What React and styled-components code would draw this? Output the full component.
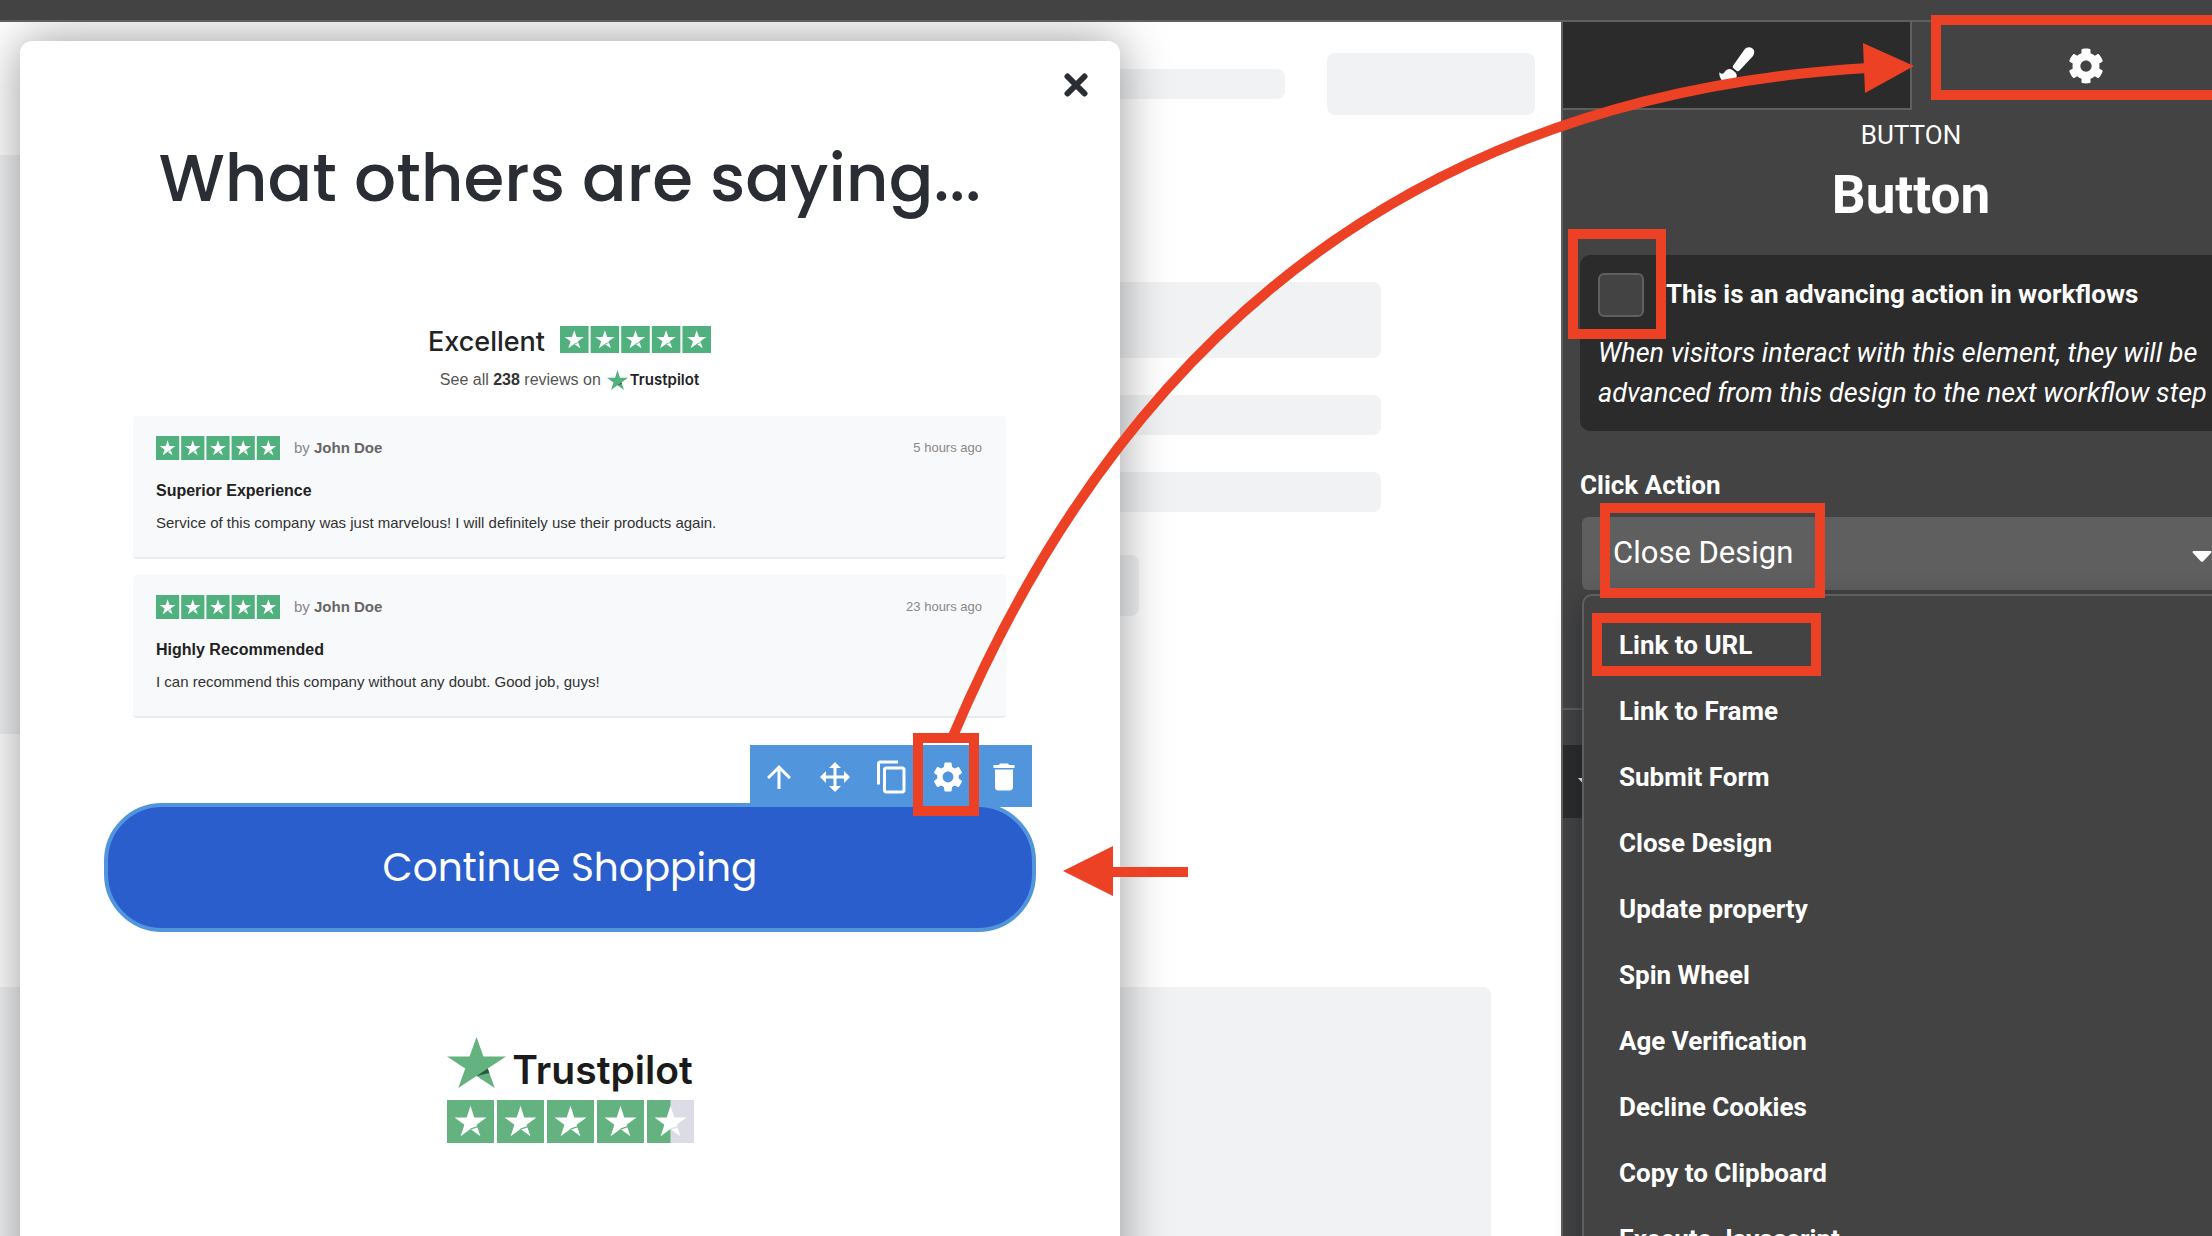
import React from "react";
import styled, { createGlobalStyle } from "styled-components";
import { FaCog } from "react-icons/fa";
import { MdArrowUpward, MdContentCopy, MdDelete, MdSettings } from "react-icons/md";

const red = "#ec4125";
const green = "#50b17f";

const GlobalStyle = createGlobalStyle`
  * {
    box-sizing: border-box;
  }

  body {
    margin: 0;
    background: #fff;
    font-family: Roboto, sans-serif;
  }

  button, input, select {
    font: inherit;
    margin: 0;
  }
`;

const Page = styled.div`
  position: relative;
  display: flex;
  flex-direction: column;
  height: 100vh;
  overflow: hidden;
`;

const TopBar = styled.header`
  flex: none;
  height: 22px;
  background: #434343;
  border-bottom: 2px solid #5f5f5f;
`;

const Workspace = styled.div`
  display: flex;
  flex: 1;
  min-height: 0;
`;

const Highlight = styled.span`
  position: absolute;
  z-index: 3;
  inset: ${(props) => props.$inset};
  width: ${(props) => props.$width || "auto"};
  border: 10px solid ${red};
  pointer-events: none;
`;

/* Placeholder site behind the popup */

const Canvas = styled.main`
  position: relative;
  flex: 1;
  min-width: 0;
  overflow: hidden;
`;

const Placeholder = styled.div`
  width: ${(props) => props.$width || "auto"};
  height: ${(props) => props.$height};
  background: #f0f2f4;
  border-radius: 8px;
`;

const HeroButton = styled(Placeholder)`
  margin-top: 6px;
`;

const SiteHeader = styled.div`
  display: flex;
  justify-content: flex-end;
  align-items: center;
  gap: 42px;
  height: 133px;
  padding: 0 26px 9px 0;
`;

const Hero = styled.div`
  display: flex;
  gap: 160px;
  height: 579px;
  margin-left: -8px;
  padding-right: 180px;
`;

const HeroCopy = styled.div`
  flex: 1;
  display: flex;
  flex-direction: column;
  gap: 37px;
  padding-top: 127px;
`;

const SiteSection = styled.div`
  margin-left: -8px;
  padding: 253px 70px 0 0;
`;

/* Popup */

const Popup = styled.section`
  position: absolute;
  top: 19px;
  left: 20px;
  width: 1100px;
  min-height: 1300px;
  padding: 87px 84px 0;
  background: #fff;
  border-radius: 12px;
  box-shadow: 0 0 50px rgba(0, 0, 0, 0.4);
  font-family: "Liberation Sans", sans-serif;
`;

const Close = styled.button`
  position: absolute;
  top: 26px;
  right: 26px;
  display: flex;
  padding: 6px;
  border: 0;
  background: none;
`;

const Title = styled.h1`
  margin: 0;
  color: #2a2d34;
  font: 500 66px/100px Poppins, Inter, sans-serif;
  text-align: center;
  white-space: nowrap;
`;

const Reviews = styled.div`
  display: flex;
  flex-direction: column;
  padding: 98px 30px 0 29px;
`;

const Summary = styled.div`
  display: flex;
  justify-content: center;
  align-items: flex-start;
  gap: 15px;
  color: #222;
  font: 500 27px/32px Inter, sans-serif;
`;

const SummaryNote = styled.p`
  display: flex;
  justify-content: center;
  align-items: center;
  gap: 6px;
  margin: 8px 0 22px;
  color: #555;
  font-size: 16px;
  line-height: 28px;

  strong {
    color: #333;
  }
`;

const InlineBrand = styled.span`
  display: flex;
  align-items: center;
  gap: 2px;
  color: #222;
  font: 600 15px/28px Inter, sans-serif;
`;

const Card = styled.article`
  margin-bottom: 16px;
  padding: 20px 24px 22px 23px;
  background: #f8f9fb;
  border-bottom: 2px solid #e8ebf0;
  border-radius: 4px;
  color: #333;
  font-size: 15px;
  line-height: 24px;
`;

const CardTop = styled.div`
  display: flex;
  align-items: center;
  gap: 14px;
  color: #888;
`;

const Author = styled.span`
  flex: 1;

  strong {
    color: #666;
  }
`;

const Time = styled.time`
  font-size: 13px;
`;

const CardTitle = styled.h2`
  margin: 19px 0 8px;
  color: #222;
  font-size: 16px;
  line-height: 24px;
`;

const CardText = styled.p`
  margin: 0;
`;

const ActionWrap = styled.div`
  position: relative;
  margin-top: 69px;
`;

const Toolbar = styled.div`
  position: absolute;
  z-index: 1;
  right: 4px;
  bottom: 125px;
  display: flex;
  width: 282px;
  height: 62px;
  padding: 2px 0 0 1px;
  background: #5195dd;
`;

const Tool = styled.button`
  position: relative;
  flex: 1;
  display: flex;
  justify-content: center;
  align-items: center;
  padding: 0;
  border: 0;
  background: none;
  color: #fff;
`;

const ActionButton = styled.button`
  display: block;
  width: 100%;
  height: 129px;
  padding: 0;
  background: #2a5ecd;
  border: 4px solid #5195dd;
  border-radius: 58px;
  color: #fff;
  font: 400 39px/60px Poppins, Inter, sans-serif;
`;

const Brand = styled.div`
  display: flex;
  flex-direction: column;
  align-items: center;
  gap: 12px;
  margin-top: 105px;
`;

const BrandName = styled.div`
  display: flex;
  gap: 6px;
  height: 51px;
  color: #1b1b1b;
  font: 600 39px/66px Inter, sans-serif;
`;

/* Settings panel */

const Sidebar = styled.aside`
  flex: none;
  width: 651px;
  background: #434343;
  border-left: 2px solid #5f5f5f;
  color: #fff;
`;

/* Wider than the visible sidebar, the rest runs off the window */
const Panel = styled.div`
  width: 696px;
`;

const Tabs = styled.div`
  display: flex;
`;

const Tab = styled.button`
  position: relative;
  flex: 1;
  display: flex;
  justify-content: center;
  align-items: center;
  height: 88px;
  padding: 0;
  background: ${(props) => (props.$active ? "#434343" : "#2b2b2b")};
  border: 0 solid #5f5f5f;
  border-width: ${(props) => (props.$active ? "0" : "0 2px 2px 0")};
  color: #fff;
`;

const PanelType = styled.p`
  margin: 10px 0 15px;
  font-size: 26px;
  line-height: 30px;
  text-align: center;
`;

const PanelTitle = styled.h2`
  margin: 0 0 30px;
  font-size: 53px;
  font-weight: 700;
  line-height: 60px;
  text-align: center;
`;

const OptionCard = styled.div`
  margin: 0 17px 39px;
  padding: 18px;
  background: #2b2b2b;
  border-radius: 10px;
`;

const CheckRow = styled.div`
  position: relative;
  display: flex;
  align-items: center;
  gap: 22px;
  font-size: 26px;
  font-weight: 700;
`;

const CheckLabel = styled.label`
  padding-bottom: 2px;
`;

const Checkbox = styled.input`
  appearance: none;
  width: 46px;
  height: 44px;
  background: #434343;
  border: 2px solid #5f5f5f;
  border-radius: 6px;
`;

const Hint = styled.p`
  margin: 16px 0 0;
  font-size: 27px;
  font-style: italic;
  line-height: 40px;
  white-space: nowrap;
`;

const Field = styled.div`
  position: relative;
  margin: 0 17px;
`;

const FieldLabel = styled.label`
  display: block;
  margin-bottom: 17px;
  font-size: 26px;
  font-weight: 700;
  line-height: 30px;
`;

const SelectWrap = styled.div`
  position: relative;
  margin-left: 2px;
`;

const Select = styled.select`
  appearance: none;
  display: block;
  width: 100%;
  height: 73px;
  padding: 0 31px 2px;
  background: #5f5f5f;
  border: 0;
  border-radius: 6px;
  color: #fff;
  font-size: 31px;
`;

const Caret = styled.svg`
  position: absolute;
  top: 34px;
  right: 30px;
`;

const Menu = styled.ul`
  position: absolute;
  z-index: 1;
  top: 77px;
  left: 0;
  right: 0;
  margin: 0;
  padding: 16px 0;
  list-style: none;
  background: #434343;
  border: 2px solid #5f5f5f;
  border-radius: 10px;
  box-shadow: 0 8px 24px rgba(25, 30, 40, 0.5);
`;

const MenuItem = styled.li`
  position: relative;
`;

const MenuButton = styled.button`
  display: block;
  width: 100%;
  padding: 0 35px;
  border: 0;
  background: none;
  color: #fff;
  font-size: 26px;
  font-weight: 700;
  line-height: 66px;
  text-align: left;
`;

const Divider = styled.hr`
  margin: 118px 0 35px;
  border: 0;
  border-top: 2px solid #5f5f5f;
`;

const SectionBar = styled.div`
  display: flex;
  align-items: center;
  height: 73px;
  padding-left: 15px;
  background: #2b2b2b;
`;

const Arrows = styled.svg`
  position: absolute;
  z-index: 4;
  top: 0;
  left: 0;
  pointer-events: none;
`;

const actions = [
  "Link to URL",
  "Link to Frame",
  "Submit Form",
  "Close Design",
  "Update property",
  "Spin Wheel",
  "Age Verification",
  "Decline Cookies",
  "Copy to Clipboard",
  "Execute Javascript",
];

const reviews = [
  {
    title: "Superior Experience",
    text: "Service of this company was just marvelous! I will definitely use their products again.",
    time: "5 hours ago",
  },
  {
    title: "Highly Recommended",
    text: "I can recommend this company without any doubt. Good job, guys!",
    time: "23 hours ago",
  },
];

const starPath = "M50 0 61.8 36.3H100L69.1 58.8 80.9 95 50 72.6 19.1 95 30.9 58.8 0 36.3H38.2Z";

const Stars = ({ width, height, size, gap, color = green, half }) => {
  const total = size * 5 + gap * 4;
  const scale = (size * 0.68) / 100;
  return (
    <svg width={width} height={height} viewBox={`0 0 ${total} ${height}`} preserveAspectRatio="none">
      {[0, 1, 2, 3, 4].map((i) => {
        const x = i * (size + gap);
        const isHalf = half && i === 4;
        return (
          <g key={i} transform={`translate(${x} 0)`}>
            <rect width={size} height={height} fill={isHalf ? "#dcdce6" : color} />
            {isHalf && <rect width={size / 2} height={height} fill={color} />}
            <g transform={`translate(${size * 0.16} ${height / 2 - scale * 49}) scale(${scale})`}>
              <path d={starPath} fill="#fff" />
              <path d="M50 72.6 75 64" stroke={isHalf ? "#dcdce6" : color} strokeWidth="4" />
            </g>
          </g>
        );
      })}
    </svg>
  );
};

const BrandStar = ({ width, height, color = green }) => (
  <svg width={width} height={height} viewBox="0 0 100 95" preserveAspectRatio="none">
    <path d={starPath} fill={color} />
    <path d="M71.6 67 69.1 58.8 50 72.6Z" fill="#2a5a35" />
  </svg>
);

const MoveIcon = () => (
  <svg width="36" height="36" viewBox="0 0 24 24" fill="currentColor">
    <path d="M12 2 16 6H13V11H18V8L22 12 18 16V13H13V18H16L12 22 8 18H11V13H6V16L2 12 6 8V11H11V6H8Z" />
  </svg>
);

const BrushIcon = () => (
  <svg width="36" height="36" viewBox="0 0 36 36" fill="currentColor">
    <path d="M25.500 2.500C27.500 0 31 -0.500 33.500 1.500C36 3.500 35.500 6.500 34 9L20.500 23.500Q19 25 17.500 23.700L14.500 21.200Q13.200 20 14.200 18.500Z" />
    <path d="M0.300 25.200C3 27.500 4.500 27 5.500 25C7.500 21.500 11.500 21.300 13 22.700L16.500 25.500C19 28 18 35.500 9.500 35.800C3.500 36 0 31 0.300 25.200Z" />
  </svg>
);

const App = () => {
  return (
    <Page>
      <GlobalStyle />
      <TopBar />
      <Workspace>
        <Canvas>
          <SiteHeader>
            <Placeholder $width="420px" $height="30px" />
            <Placeholder $width="208px" $height="62px" />
          </SiteHeader>
          <Hero>
            <Placeholder $width="700px" $height="579px" />
            <HeroCopy>
              <Placeholder $height="76px" />
              <Placeholder $height="40px" />
              <Placeholder $height="40px" />
              <HeroButton $width="287px" $height="61px" />
            </HeroCopy>
          </Hero>
          <SiteSection>
            <Placeholder $height="400px" />
          </SiteSection>

          <Popup>
            <Close aria-label="Close">
              <svg width="24" height="24" viewBox="0 0 24 24" stroke="#2a2d34" strokeWidth="6" strokeLinecap="round">
                <path d="M3.500 3.500 20.500 20.500M20.500 3.500 3.500 20.500" />
              </svg>
            </Close>
            <Title>What others are saying...</Title>
            <Reviews>
              <Summary>
                Excellent
                <Stars width={151} height={27} size={28} gap={2} />
              </Summary>
              <SummaryNote>
                <span>
                  See all <strong>238</strong> reviews on
                </span>
                <InlineBrand>
                  <BrandStar width={21} height={20} />
                  Trustpilot
                </InlineBrand>
              </SummaryNote>
              {reviews.map((review) => (
                <Card key={review.title}>
                  <CardTop>
                    <Stars width={124} height={24} size={23} gap={2} />
                    <Author>
                      by <strong>John Doe</strong>
                    </Author>
                    <Time>{review.time}</Time>
                  </CardTop>
                  <CardTitle>{review.title}</CardTitle>
                  <CardText>{review.text}</CardText>
                </Card>
              ))}
            </Reviews>
            <ActionWrap>
              <Toolbar>
                <Tool aria-label="Select parent">
                  <MdArrowUpward size={36} />
                </Tool>
                <Tool aria-label="Move">
                  <MoveIcon />
                </Tool>
                <Tool aria-label="Duplicate">
                  <MdContentCopy size={36} />
                </Tool>
                <Tool aria-label="Settings">
                  <MdSettings size={36} />
                  <Highlight $inset="-14px -3px -9px -7px" />
                </Tool>
                <Tool aria-label="Delete">
                  <MdDelete size={36} />
                </Tool>
              </Toolbar>
              <ActionButton>Continue Shopping</ActionButton>
            </ActionWrap>
            <Brand>
              <BrandName>
                <BrandStar width={59} height={51} color="#65b281" />
                Trustpilot
              </BrandName>
              <Stars width={247} height={43} size={47} gap={3} color="#65b281" half />
            </Brand>
          </Popup>
        </Canvas>

        <Sidebar>
          <Panel>
            <Tabs>
              <Tab aria-label="Style">
                <BrushIcon />
              </Tab>
              <Tab $active aria-label="Settings">
                <FaCog size={36} />
                <Highlight $inset="-7px -10px 10px 19px" />
              </Tab>
            </Tabs>
            <PanelType>BUTTON</PanelType>
            <PanelTitle>Button</PanelTitle>
            <OptionCard>
              <CheckRow>
                <Checkbox type="checkbox" id="advancing" />
                <CheckLabel htmlFor="advancing">This is an advancing action in workflows</CheckLabel>
                <Highlight $inset="-44px auto -22px -30px" $width="98px" />
              </CheckRow>
              <Hint>
                When visitors interact with this element, they will be
                <br />
                advanced from this design to the next workflow step
              </Hint>
            </OptionCard>
            <Field>
              <FieldLabel htmlFor="click-action">Click Action</FieldLabel>
              <SelectWrap>
                <Select id="click-action" defaultValue="Close Design">
                  {actions.map((action) => (
                    <option key={action}>{action}</option>
                  ))}
                </Select>
                <Caret width="20" height="11" viewBox="0 0 20 11">
                  <path d="M1 0H19Q20 1 19 2L11 10.500Q10 11 9 10.500L1 2Q0 1 1 0Z" fill="#fff" />
                </Caret>
                <Highlight $inset="-14px auto -8px 18px" $width="225px" />
                <Menu>
                  {actions.map((action, i) => (
                    <MenuItem key={action}>
                      <MenuButton>{action}</MenuButton>
                      {i === 0 && <Highlight $inset="1px auto 2px 8px" $width="229px" />}
                    </MenuItem>
                  ))}
                </Menu>
              </SelectWrap>
            </Field>
            <Divider />
            <SectionBar>
              <svg width="14" height="8" viewBox="0 0 14 8">
                <path d="M0 0H14L7 8Z" fill="#fff" />
              </svg>
            </SectionBar>
          </Panel>
        </Sidebar>
      </Workspace>

      <Arrows width="1930" height="910" viewBox="0 0 1930 910" fill={red}>
        <path d="M953 736Q1220 106 1868 68" fill="none" stroke={red} strokeWidth="10" />
        <path d="M1863 43 1914 66 1865 93Z" />
        <path d="M1063 871 1113 846V867H1188V877H1113V896Z" />
      </Arrows>
    </Page>
  );
};

export default App;
